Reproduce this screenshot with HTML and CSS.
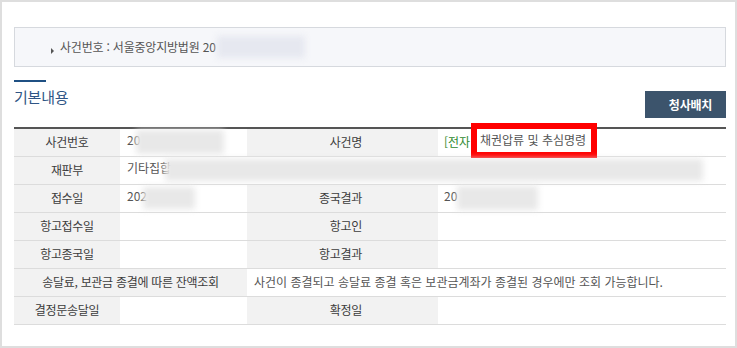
FILE: index.html
```html
<!DOCTYPE html>
<html lang="ko">
<head>
<meta charset="utf-8">
<title>사건 기본내용</title>
<link rel="stylesheet" href="styles.css">
</head>
<body>
<div class="frame">
  <div class="case-bar">
    <span class="bullet"></span>
    <span class="case-text">사건번호 : 서울중앙지방법원 20</span><span class="redact redact-bar"></span>
  </div>

  <div class="section-head">
    <h2 class="section-title">기본내용</h2>
    <button class="btn" type="button">청사배치</button>
  </div>

  <table class="info">
    <colgroup>
      <col class="c1"><col class="c2"><col class="c3"><col class="c4">
    </colgroup>
    <tbody>
      <tr>
        <th class="lab">사건번호</th>
        <td class="val">20<span class="redact r-num"></span></td>
        <th class="lab lab2">사건명</th>
        <td class="val val2 mark-cell"><span class="mark-wrap"><span class="green">[전자</span><span class="mark">채권압류 및 추심명령</span></span></td>
      </tr>
      <tr>
        <th class="lab">재판부</th>
        <td class="val" colspan="3">기타집합<span class="redact r-court"></span></td>
      </tr>
      <tr>
        <th class="lab">접수일</th>
        <td class="val">202<span class="redact r-date"></span></td>
        <th class="lab lab2">종국결과</th>
        <td class="val val2">20<span class="redact r-result"></span></td>
      </tr>
      <tr>
        <th class="lab">항고접수일</th>
        <td class="val"></td>
        <th class="lab lab2">항고인</th>
        <td class="val val2"></td>
      </tr>
      <tr>
        <th class="lab">항고종국일</th>
        <td class="val"></td>
        <th class="lab lab2">항고결과</th>
        <td class="val val2"></td>
      </tr>
      <tr>
        <th class="lab" colspan="2">송달료, 보관금 종결에 따른 잔액조회</th>
        <td class="val msg" colspan="2">사건이 종결되고 송달료 종결 혹은 보관금계좌가 종결된 경우에만 조회 가능합니다.</td>
      </tr>
      <tr>
        <th class="lab">결정문송달일</th>
        <td class="val"></td>
        <th class="lab lab2">확정일</th>
        <td class="val val2"></td>
      </tr>
    </tbody>
  </table>
</div>
</body>
</html>
```

FILE: styles.css
```css
* { box-sizing: border-box; }

html, body {
  margin: 0;
  padding: 0;
  background: #ffffff;
}

body {
  font-family: "Noto Sans CJK KR", "Noto Sans", sans-serif;
  color: #555;
}

.frame {
  width: 737px;
  height: 348px;
  border: 2px solid #dedede;
  padding: 25px 9px 0 12px;
  overflow: hidden;
}

.case-bar {
  display: flex;
  align-items: center;
  height: 40px;
  border: 1px solid #d6d9de;
  background: #f6f7fa;
  padding-left: 36px;
}

.bullet {
  width: 0;
  height: 0;
  border-left: 3px solid #555;
  border-top: 3px solid transparent;
  border-bottom: 3px solid transparent;
  margin-right: 6px;
  margin-top: 7px;
}

.case-text {
  font-size: 12px;
  letter-spacing: -0.2px;
  color: #555;
  line-height: 20px;
}

.redact {
  display: inline-block;
  vertical-align: middle;
  background: #e8e8e8;
  filter: blur(3px);
}

.redact-bar {
  width: 88px;
  height: 22px;
  margin-left: 1px;
  background: #e6e8f0;
}

.section-head {
  display: flex;
  justify-content: space-between;
  align-items: flex-end;
  height: 60px;
  padding-top: 13px;
}

.section-title {
  align-self: flex-start;
  margin: 0;
  font-size: 15px;
  font-weight: normal;
  color: #2f5585;
  line-height: 20px;
  letter-spacing: -0.2px;
}

.section-title::before {
  content: "";
  display: block;
  width: 32px;
  height: 2px;
  background: #1f5083;
  margin-bottom: 5px;
}

.btn {
  width: 81px;
  height: 27px;
  margin-bottom: 9px;
  border: 0;
  background: #3c546c;
  color: #fff;
  font-family: inherit;
  font-size: 12px;
  font-weight: bold;
  letter-spacing: -0.2px;
  padding: 0 0 0 10px;
}

.info {
  width: 712px;
  border-collapse: collapse;
  border-top: 2px solid #555;
  table-layout: fixed;
}

.c1 { width: 106px; }
.c2 { width: 127px; }
.c3 { width: 191px; }
.c4 { width: 288px; }

.info th,
.info td {
  height: 28px;
  padding: 0;
  border-bottom: 1px solid #dcdcdc;
  font-size: 12px;
  line-height: 16px;
  white-space: nowrap;
  overflow: visible;
}

.lab {
  background: #f2f2f2;
  color: #3c3c3c;
  font-weight: normal;
  text-align: center;
  letter-spacing: -0.3px;
}

.lab2 {
  text-align: right;
  padding-right: 76px !important;
}

.val {
  color: #555;
  text-align: left;
  letter-spacing: 0;
  padding-left: 7px !important;
}

.val2 {
  padding-left: 6px !important;
}

.msg {
  padding-left: 7px !important;
}

.r-num { width: 88px; height: 24px; margin-left: -4px; }
.r-date { width: 52px; height: 22px; margin-left: -4px; }
.r-result { width: 81px; height: 24px; margin-left: 0; }
.r-court { width: 538px; height: 22px; margin-left: -6px; }

.mark-wrap {
  position: relative;
  display: inline-block;
}

.green {
  color: #2e8a2e;
}

.mark {
  position: absolute;
  left: 27px;
  top: -11px;
  width: 126px;
  height: 35px;
  border: 6px solid #ff0000;
  background: #fff;
  color: #555;
  padding-left: 3px;
  line-height: 22px;
  white-space: nowrap;
}
```
